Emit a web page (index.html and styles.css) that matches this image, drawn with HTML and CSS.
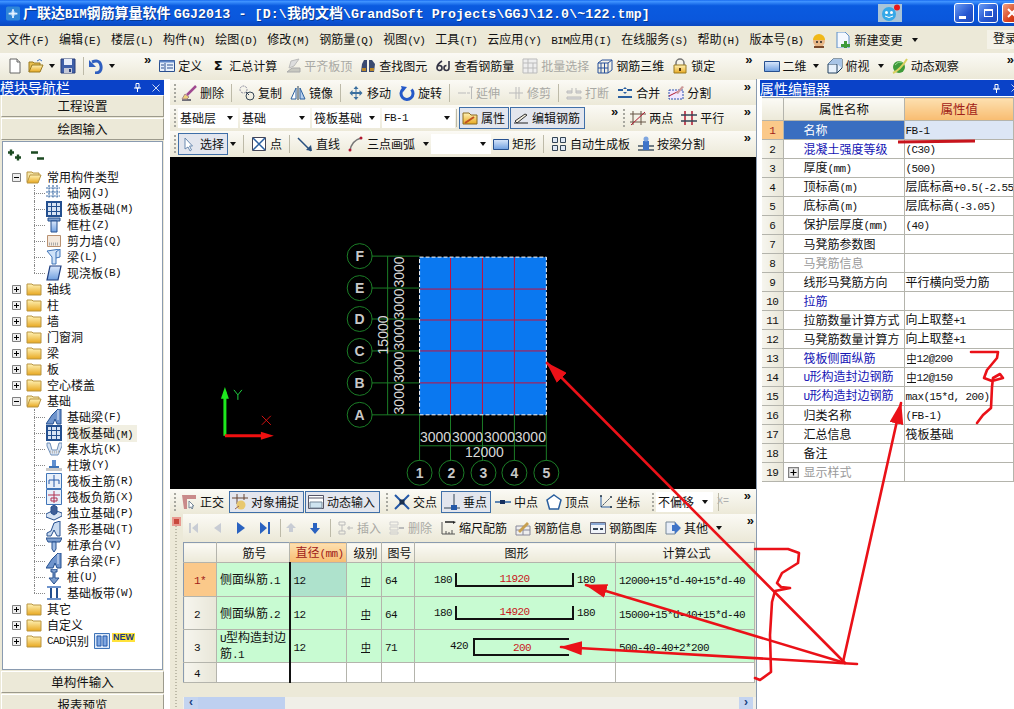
FILE: index.html
```html
<!DOCTYPE html>
<html lang="zh">
<head>
<meta charset="utf-8">
<title>广联达BIM钢筋算量软件 GGJ2013</title>
<link rel="stylesheet" href="styles.css">
</head>
<body>
<svg class="sprite" width="0" height="0" aria-hidden="true">
<defs>
<linearGradient id="gblue" x1="0" y1="0" x2="0" y2="1"><stop offset="0" stop-color="#dbe8fb"/><stop offset="1" stop-color="#6f9fe0"/></linearGradient>
<linearGradient id="gfold" x1="0" y1="0" x2="0" y2="1"><stop offset="0" stop-color="#fff3b8"/><stop offset="1" stop-color="#e8a820"/></linearGradient>
<symbol id="new" viewBox="0 0 16 16"><path d="M3 1h7l3 3v11H3z" fill="#fff" stroke="#666"/><path d="M10 1v3h3" fill="#ddd" stroke="#666"/></symbol>
<symbol id="open" viewBox="0 0 16 16"><path d="M1 14V4h4l1 1h6v2" fill="#e8c050" stroke="#9a7a20"/><path d="M1 14l3-7h11l-3 7z" fill="url(#gfold)" stroke="#9a7a20"/><path d="M9 3q3-3 5 0" fill="none" stroke="#3a6fc0"/></symbol>
<symbol id="save" viewBox="0 0 16 16"><path d="M1 1h14v14H1z" fill="#3f5fa8" stroke="#2a3f78"/><path d="M4 1h8v6H4z" fill="#e8eefa"/><path d="M4 10h8v5H4z" fill="#c4c8d8"/><path d="M9 11h2v3H9z" fill="#2a3f78"/></symbol>
<symbol id="undo" viewBox="0 0 16 16"><path d="M4 4q8-3 9 4t-6 7" fill="none" stroke="#2f5fc0" stroke-width="3"/><path d="M1 2v7h7z" fill="#2f5fc0"/></symbol>
<symbol id="def" viewBox="0 0 16 16"><path d="M.5 2.500h15v11H.5z" fill="#e8f0fb" stroke="#2a4f8f"/><path d="M.5 2.500h15v2H.5z" fill="#5f86c8"/><path d="M6 5v8M2 7h3M2 10h3M8 7h6M8 10h6" stroke="#2a4f8f"/></symbol>
<symbol id="align" viewBox="0 0 16 16"><path d="M2 14h13v-4H7z" fill="#c8c8c0" stroke="#aaa"/><path d="M4 10l2-7 8-2-5 7z" fill="#ddd" stroke="#bbb"/></symbol>
<symbol id="find" viewBox="0 0 16 16"><path d="M2 6l2-4h3v12H1zM14 14H9V2h3l3 4z" fill="#3a4a70"/><path d="M2 10h4v3H2zM10 10h4v3h-4z" fill="#b8862a"/></symbol>
<symbol id="see" viewBox="0 0 16 16"><path d="M7 3Q2 6 2 10a2.500 2.500 0 1 0 5 0a2.500 2.500 0 0 0-5 0M14 3v7a2.500 2.500 0 1 1-2.500-2.500" fill="none" stroke="#334" stroke-width="1.600"/></symbol>
<symbol id="batch" viewBox="0 0 16 16"><path d="M1 1h14v14H1zM1 5h14M1 10h14M6 1v14M11 5v10" fill="#eee" stroke="#bbb"/></symbol>
<symbol id="rebar3d" viewBox="0 0 16 16"><path d="M1 5l4-3h10v10l-4 3H1zM1 5h10v10M11 5l4-3M4 5v10M7.500 5v10M1 10h10" fill="none" stroke="#28509a"/></symbol>
<symbol id="lock" viewBox="0 0 16 16"><path d="M4 8V5a4 4 0 0 1 8 0v3" fill="none" stroke="#777" stroke-width="1.500"/><path d="M2 7h12v8H2z" fill="url(#gfold)" stroke="#9a7a20"/><path d="M7 10h2v3H7z" fill="#5a3a10"/></symbol>
<symbol id="rect" viewBox="0 0 16 16"><path d="M.5 3.500h15v10H.5z" fill="url(#gblue)" stroke="#27508f"/></symbol>
<symbol id="cube" viewBox="0 0 16 16"><path d="M1 6l5-5h9v9l-5 5H1z" fill="#e8f1fb" stroke="#23415f"/><path d="M1 6h9v9M10 6l5-5" fill="none" stroke="#23415f"/><path d="M6 1h9v9l-5-4H1z" fill="#a8c4e6"/></symbol>
<symbol id="orbit" viewBox="0 0 16 16"><circle cx="7" cy="9" r="6" fill="#3f9a3a"/><path d="M1 15Q8 12 15 1" fill="none" stroke="#d8d060" stroke-width="2"/><path d="M3 7q3-4 7-3" fill="none" stroke="#9fe09a"/></symbol>
<symbol id="del" viewBox="0 0 16 16"><path d="M1 15h9" stroke="#445" stroke-width="1.500"/><path d="M1 14l3-5 4 3-2 2z" fill="#eed27a" stroke="#a88"/><path d="M6 10L15 1" stroke="#a04a90" stroke-width="2.500"/></symbol>
<symbol id="copy" viewBox="0 0 16 16"><circle cx="4.500" cy="4.500" r="3.500" fill="none" stroke="#889" stroke-dasharray="2 1"/><circle cx="11" cy="11" r="4" fill="none" stroke="#345"/><path d="M7 7l3 3" stroke="#345"/></symbol>
<symbol id="mirror" viewBox="0 0 16 16"><path d="M8 1v14" stroke="#345"/><path d="M6 3v11H1z" fill="#fff" stroke="#2a5f9f"/><path d="M10 3v11h5z" fill="#b9d1ef" stroke="#2a5f9f"/></symbol>
<symbol id="move" viewBox="0 0 16 16"><path d="M8 1l2.500 3h-2v3h3V5l3 3-3 3V9h-3v3h2L8 15l-2.500-3h2V9h-3v2l-3-3 3-3v2h3V4h-2z" fill="#3a6f9f"/></symbol>
<symbol id="rot" viewBox="0 0 16 16"><path d="M12.500 4.500A6 6 0 1 1 4 4" fill="none" stroke="#2458c8" stroke-width="3"/><path d="M2 1l6 1-4 5z" fill="#2458c8"/></symbol>
<symbol id="ext" viewBox="0 0 16 16"><path d="M1 8h8M10 8h3M14.500 2v12M12 2h5" stroke="#bbb"/></symbol>
<symbol id="trim" viewBox="0 0 16 16"><path d="M1 8h14M8 2v12M11 2v12" stroke="#bbb"/></symbol>
<symbol id="brk" viewBox="0 0 16 16"><path d="M1 12h14v2H1zM1 6h5v2H1zM10 6h5v2h-5zM6 3v3M10 3v3" fill="#ddd" stroke="#bbb"/></symbol>
<symbol id="merge" viewBox="0 0 16 16"><path d="M1 5h5M10 5h5M1 12h14" stroke="#2a5f9f" stroke-width="2"/><path d="M8 2l2 2H6zM8 9l2-2H6z" fill="#2a5f9f"/></symbol>
<symbol id="split" viewBox="0 0 16 16"><path d="M1 5h14v9H1z" fill="#f0e8ff" stroke="#2a4fb0" stroke-dasharray="2 1"/><path d="M1 11l10-5" stroke="#b01830"/><path d="M8 8l6-7 2 1-6 7z" fill="#c99"/></symbol>
<symbol id="prop" viewBox="0 0 16 16"><path d="M1 14V3h6l2 2h6v9z" fill="url(#gfold)" stroke="#8a6a20"/><path d="M3 13l9-6" stroke="#c05020" stroke-width="2"/></symbol>
<symbol id="edit" viewBox="0 0 16 16"><path d="M1 13h14" stroke="#222"/><path d="M2 11l2 2 10-8-2-1z" fill="#f4efe0" stroke="#333"/></symbol>
<symbol id="two" viewBox="0 0 16 16"><path d="M3 1v14M11 1v14M0 4h16M0 12h16" stroke="#654"/><path d="M1 15L15 2" stroke="#b01830"/></symbol>
<symbol id="para" viewBox="0 0 16 16"><path d="M4 1v14M11 1v14" stroke="#b01830" stroke-width="1.500"/><path d="M0 5h16M0 11h16" stroke="#345" stroke-width="1.500"/></symbol>
<symbol id="cursor" viewBox="0 0 16 16"><path d="M4 2v11l3-2 2 4 1.500-1-2-4h3z" fill="#fff" stroke="#6a8ab0"/></symbol>
<symbol id="pt" viewBox="0 0 16 16"><path d="M1.500 1.500h13v13h-13z" fill="#fff" stroke="#445"/><path d="M2 2l12 12M14 2L2 14" stroke="#2a5f9f" stroke-width="1.500"/></symbol>
<symbol id="ln" viewBox="0 0 16 16"><path d="M1 2l13 13" stroke="#28507f" stroke-width="1.500"/><path d="M15 15l-6-1 5-5z" fill="#28507f"/></symbol>
<symbol id="arc" viewBox="0 0 16 16"><path d="M2 15Q3 5 13 2" fill="none" stroke="#777" stroke-width="1.500"/><circle cx="2" cy="14" r="1.500" fill="#b01830"/><circle cx="13" cy="2" r="1.500" fill="#b01830"/></symbol>
<symbol id="auto" viewBox="0 0 16 16"><path d="M1.500 1.500h5v5h-5zM9.500 1.500h5v5h-5zM1.500 9.500h5v5h-5zM9.500 9.500h5v5h-5z" fill="#dfe8f4" stroke="#345"/></symbol>
<symbol id="bmsplit" viewBox="0 0 16 16"><path d="M0 10h16M0 14h16" stroke="#456" stroke-width="1.500"/><path d="M5 5h6v9H5z" fill="#3f74c8"/><circle cx="8" cy="3" r="2.500" fill="#7fa6e0"/></symbol>
<symbol id="ortho" viewBox="0 0 16 16"><path d="M1 1h5v14H3zM6 1h9v4H6z" fill="#c98a8a"/><path d="M8 7v7l2-1 1 2 1-1-1-2h2z" fill="#fff" stroke="#789"/></symbol>
<symbol id="snap" viewBox="0 0 16 16"><path d="M5 0v10M12 0v6M0 4h16" stroke="#643"/><circle cx="9" cy="11" r="4.500" fill="#e8c870"/><path d="M3 15l4-3" stroke="#965"/></symbol>
<symbol id="dyn" viewBox="0 0 16 16"><path d="M.5 1.500h15v13H.5z" fill="#fff" stroke="#556"/><path d="M1 4h14" stroke="#556"/><path d="M2 8h12v6H2z" fill="#cfe4f0" stroke="#789"/></symbol>
<symbol id="xpt" viewBox="0 0 16 16"><path d="M1 1l14 14M15 1L1 15" stroke="#2458a8" stroke-width="2"/><rect x="5.500" y="5.500" width="5" height="5" fill="#1a3050"/></symbol>
<symbol id="perp" viewBox="0 0 16 16"><path d="M10 0v14M0 14h16" stroke="#345"/><rect x="7" y="11" width="6" height="5" fill="#2458a8"/></symbol>
<symbol id="mid" viewBox="0 0 16 16"><path d="M0 8h16" stroke="#2a5f9f" stroke-width="1.500"/><rect x="5" y="6" width="5" height="4" fill="#16305f"/></symbol>
<symbol id="vx" viewBox="0 0 16 16"><path d="M8 1l7 5-2.500 9h-9L1 6z" fill="#fff" stroke="#2a5f9f" stroke-width="1.500"/></symbol>
<symbol id="coord" viewBox="0 0 16 16"><path d="M4 2v11h11" fill="none" stroke="#2a5f9f"/><path d="M4 13L13 4" stroke="#345" stroke-dasharray="2 1"/><circle cx="4" cy="2" r="1" fill="#234"/><circle cx="14" cy="3" r="1" fill="#234"/><circle cx="14" cy="13" r="1" fill="#234"/></symbol>
<symbol id="first" viewBox="0 0 16 16"><path d="M4 3h2v10H4zM13 3v10L7 8z" fill="#c8ccd4"/></symbol>
<symbol id="prev" viewBox="0 0 16 16"><path d="M12 3v10L5 8z" fill="#c8ccd4"/></symbol>
<symbol id="next" viewBox="0 0 16 16"><path d="M4 2v12l8-6z" fill="#2a62c0"/></symbol>
<symbol id="last" viewBox="0 0 16 16"><path d="M3 2v12l7-6zM11 2h2v12h-2z" fill="#2a62c0"/></symbol>
<symbol id="up" viewBox="0 0 16 16"><path d="M8 3l5 5h-3v4H6V8H3z" fill="#c8ccd4"/></symbol>
<symbol id="down" viewBox="0 0 16 16"><path d="M8 14l5-6h-3V3H6v5H3z" fill="#2a62c0"/></symbol>
<symbol id="ins" viewBox="0 0 16 16"><path d="M1 2h6v3H1zM1 11h6v3H1zM4 5v6" fill="none" stroke="#bbb"/><path d="M9 8h6M11 6v4" stroke="#bbb"/></symbol>
<symbol id="rm" viewBox="0 0 16 16"><path d="M1 2h8v3H1zM1 7h8v3H1zM1 12h8v2H1z" fill="none" stroke="#ccc"/><path d="M10 8h5" stroke="#bbb" stroke-width="2"/></symbol>
<symbol id="scale" viewBox="0 0 16 16"><path d="M2 2v12M2 14h13M6 14v-3M9 14v-2M12 14v-4" stroke="#555"/><path d="M5 2h8" stroke="#222" stroke-width="1.500"/><path d="M13 1l3 1-3 2z" fill="#222"/></symbol>
<symbol id="info" viewBox="0 0 16 16"><path d="M1 6h14v9H1z" fill="#eee" stroke="#889"/><path d="M1 10h14M8 6v9" stroke="#889"/><path d="M3 11L12 2l2 2-9 9z" fill="#c8a050"/></symbol>
<symbol id="lib" viewBox="0 0 16 16"><path d="M.5 2.500h15v11H.5z" fill="#f0f4fa" stroke="#667"/><path d="M1 3h14v2H1z" fill="#8aa8d4"/><path d="M3 9h5M10 9h3" stroke="#345" stroke-width="2"/></symbol>
<symbol id="oth" viewBox="0 0 16 16"><path d="M1 2h9v12H1z" fill="#e8eef8" stroke="#789"/><path d="M7 5h3V2l6 6-6 6v-3H7z" fill="#3f74c8"/></symbol>
<symbol id="tgrid" viewBox="0 0 16 16"><path d="M3 0v13M7 0v13M11 0v13M0 3h14M0 7h14M0 11h14" stroke="#3f6fa8" stroke-width="1.200" stroke-dasharray="2 .6"/></symbol>
<symbol id="traft" viewBox="0 0 16 16"><path d="M1 1h14v14H1z" fill="#d8e4f4" stroke="#234f8f" stroke-width="2"/><path d="M5.500 1v14M10.500 1v14M1 5.500h14M1 10.500h14" stroke="#234f8f"/></symbol>
<symbol id="tcol" viewBox="0 0 16 16"><path d="M2 1h12v3H2z" fill="#7fa0cf" stroke="#27508f"/><path d="M5 4h6v11H5z" fill="url(#gblue)" stroke="#27508f"/></symbol>
<symbol id="twall" viewBox="0 0 16 16"><path d="M1.500 2.500h13v11h-13z" fill="#f4e8dc" stroke="#b89070"/><path d="M3 11h9" stroke="#aaa" stroke-width="3" stroke-dasharray="1 1"/></symbol>
<symbol id="tbeam" viewBox="0 0 16 16"><path d="M1 2l13-2v8l-4 1v6H6V8z" fill="#cfe2f8" stroke="#3f74b8"/><path d="M10 9V3l4-3" fill="none" stroke="#3f74b8"/></symbol>
<symbol id="tslab" viewBox="0 0 16 16"><path d="M4 1h11l-3 14H1z" fill="url(#gblue)" stroke="#1f3f80" stroke-width="1.200"/></symbol>
<symbol id="tfb" viewBox="0 0 16 16"><path d="M0 15l6-9 6-6h3v15H11l-2-5-2 5z" fill="#6f94cc" stroke="#234f8f"/><path d="M12 1v10" stroke="#dfe8f8"/></symbol>
<symbol id="tpit" viewBox="0 0 16 16"><path d="M1 2h3l2 7h5l2-7h3v3l-4 9H5L1 5z" fill="#d8e4f4" stroke="#6f8fb8"/><path d="M4 11h9" stroke="#bbb" stroke-dasharray="1 1" stroke-width="3"/></symbol>
<symbol id="tpier" viewBox="0 0 16 16"><path d="M0 11h16v3H0z" fill="#c8c8c8"/><path d="M3 9h10v2H3z" fill="#3f74b8"/><path d="M6 3h4v6H6z" fill="#5f8fd0"/></symbol>
<symbol id="trm" viewBox="0 0 16 16"><path d="M.5 .5h15v15H.5z" fill="#e8f0fa" stroke="#3f74b8"/><path d="M8 2v12M3 7h10M3 7v4M13 7v4" stroke="#2458a8"/></symbol>
<symbol id="trn" viewBox="0 0 16 16"><path d="M.5 .5h15v15H.5z" fill="#e8f0fa" stroke="#3f74b8"/><path d="M2 6h12M8 2v12M5 9h6v3H5z" fill="none" stroke="#b03050"/></symbol>
<symbol id="tiso" viewBox="0 0 16 16"><path d="M0 9l8-4 8 3v3l-8 4-8-3z" fill="#d8e4f4" stroke="#27508f"/><path d="M5 8V2l3-2 3 2v6l-3 2z" fill="#3f5f98" stroke="#27508f"/></symbol>
<symbol id="tstrip" viewBox="0 0 16 16"><path d="M1 15v-3l4-2 3-8 6-2v15H11l-3-6-3 6z" fill="#c8daf0" stroke="#27508f"/></symbol>
<symbol id="tcap" viewBox="0 0 16 16"><path d="M0 1h16l-2 4H2z" fill="#7fa0cf" stroke="#27508f"/><path d="M6 5h4v7l-2 3-2-3z" fill="#9fbce4" stroke="#27508f"/></symbol>
<symbol id="tpile" viewBox="0 0 16 16"><path d="M5 0h6v3H9v6h4l-5 6-5-6h4V3H5z" fill="#7a9ccc" stroke="#27508f"/></symbol>
<symbol id="tband" viewBox="0 0 16 16"><path d="M1 1h14v2H1zM1 13h14v2H1z" fill="#6f94cc"/><path d="M4 3h2v10H4zM10 3h2v10h-2z" fill="#234f8f"/></symbol>
<symbol id="fold" viewBox="0 0 16 16"><path d="M1 14V3h5l1 1h8v10z" fill="url(#gfold)" stroke="#b89440"/></symbol>
<symbol id="foldo" viewBox="0 0 16 16"><path d="M1 13V3h5l1 1h6v2" fill="#f6e6a8" stroke="#b89440"/><path d="M1 14l3-8h11l-3 8z" fill="url(#gfold)" stroke="#b89440"/></symbol>
<symbol id="plus" viewBox="0 0 9 9"><path d="M.5 .5h8v8h-8z" fill="#eee" stroke="#808080"/><path d="M2 4.500h5M4.500 2v5" stroke="#000"/></symbol>
<symbol id="minus" viewBox="0 0 9 9"><path d="M.5 .5h8v8h-8z" fill="#eee" stroke="#808080"/><path d="M2 4.500h5" stroke="#000"/></symbol>
<symbol id="cad" viewBox="0 0 16 16"><path d="M.5 .5h15v15H.5z" fill="#dce8f8" stroke="#3f74b8"/><path d="M3 3h4v10H3zM9 3h4v10H9z" fill="#7fa6e0" stroke="#2458a8"/></symbol>
<symbol id="user" viewBox="0 0 16 16"><circle cx="8" cy="9" r="6" fill="#e8b888"/><path d="M2 8a6 6 0 0 1 12 0z" fill="#f0b818"/><circle cx="6" cy="10" r="1" fill="#222"/><circle cx="10" cy="10" r="1" fill="#222"/><path d="M3 14h10v2H3z" fill="#7a4a2a"/></symbol>
<symbol id="chg" viewBox="0 0 16 16"><path d="M2 0h8l4 4v12H2z" fill="#f4f8ff" stroke="#5f8fc8"/><path d="M9 9h3v3h3v3h-3v1H9v-1H6v-3h3z" fill="#3f9a3a"/></symbol>
<symbol id="expand" viewBox="0 0 15 12"><path d="M1 3.500h6M4 .5v6M8 8.500h6M11 5.500v6" stroke="#1c4a22" stroke-width="2.400"/></symbol>
<symbol id="collapse" viewBox="0 0 15 12"><path d="M1 3.500h7M7 9.500h7" stroke="#1c4a22" stroke-width="2.400"/></symbol>
<symbol id="pin" viewBox="0 0 7 9"><path d="M2 .5h3v4.500H2zM0 5h7M3.500 5v4" fill="none" stroke="#fff"/></symbol>
<symbol id="cross" viewBox="0 0 8 8"><path d="M.5 .5l7 7M7.500 .5l-7 7" stroke="#cdd8f4"/></symbol>
</defs>
</svg>

<div class="app">
  <header class="titlebar">
    <svg class="app-logo" viewBox="0 0 16 16"><rect width="16" height="16" rx="2" fill="#2f86d8"/><path d="M3 8h10M8 3v10" stroke="#e8f4ff" stroke-width="2"/><circle cx="8" cy="8" r="2.500" fill="none" stroke="#bfe0ff"/></svg>
    <h1 class="title-text">广联达<b class="tl-s">BIM</b>钢筋算量软件 <b class="tl">GGJ2013 - [D:\</b>我的文档<b class="tl">\GrandSoft Projects\GGJ\12.0\~122.tmp]</b></h1>
    <div class="title-right">
      <svg class="smile" viewBox="0 0 24 18"><rect width="24" height="18" fill="#a8c4d8"/><circle cx="11" cy="10" r="7" fill="#35a8e8"/><circle cx="8.500" cy="8.500" r="1.500" fill="#fff"/><circle cx="13.500" cy="8.500" r="1.500" fill="#fff"/><path d="M7 12q4 3 8 0" fill="none" stroke="#fff"/><circle cx="19" cy="3.500" r="3" fill="#e81818"/></svg>
      <div class="winbtn"><span class="g-min"></span></div>
      <div class="winbtn"><span class="g-rest"></span></div>
      <div class="winbtn close"><svg class="g-x" viewBox="0 0 10 10"><path d="M1 1l8 8M9 1l-8 8" stroke="#fff" stroke-width="2"/></svg></div>
    </div>
  </header>

  <nav class="menubar">
    <span>文件<i>(F)</i></span><span>编辑<i>(E)</i></span><span>楼层<i>(L)</i></span><span>构件<i>(N)</i></span><span>绘图<i>(D)</i></span><span>修改<i>(M)</i></span><span>钢筋量<i>(Q)</i></span><span>视图<i>(V)</i></span><span>工具<i>(T)</i></span><span>云应用<i>(Y)</i></span><span><i>BIM</i>应用<i>(I)</i></span><span>在线服务<i>(S)</i></span><span>帮助<i>(H)</i></span><span>版本号<i>(B)</i></span>
    <svg class="ic ml-user"><use href="#user"/></svg>
    <span class="tool"><svg class="ic"><use href="#chg"/></svg>新建变更</span><em class="dd"></em>
    <span class="login">登录</span>
  </nav>

  <div class="tb tb-top">
    <svg class="ic"><use href="#new"/></svg>
    <svg class="ic ml-m3"><use href="#open"/></svg><em class="dd ml-m3"></em>
    <svg class="ic ml-m3"><use href="#save"/></svg><s class="sep"></s>
    <svg class="ic ml-m3"><use href="#undo"/></svg><em class="dd ml-m3"></em>
    <b class="more ml-21">»</b>
    <span class="tool"><svg class="ic"><use href="#def"/></svg>定义</span>
    <span class="tool"><span class="ic sigma">Σ</span>汇总计算</span>
    <span class="tool off"><svg class="ic"><use href="#align"/></svg>平齐板顶</span>
    <span class="tool"><svg class="ic"><use href="#find"/></svg>查找图元</span>
    <span class="tool"><svg class="ic"><use href="#see"/></svg>查看钢筋量</span>
    <span class="tool off"><svg class="ic"><use href="#batch"/></svg>批量选择</span>
    <span class="tool"><svg class="ic"><use href="#rebar3d"/></svg>钢筋三维</span>
    <span class="tool"><svg class="ic"><use href="#lock"/></svg>锁定</span>
    <b class="more ml-22">»</b>
    <span class="tool ml-3"><svg class="ic"><use href="#rect"/></svg>二维</span><em class="dd ml-m2"></em>
    <span class="tool"><svg class="ic"><use href="#cube"/></svg>俯视</span><em class="dd"></em>
    <span class="tool"><svg class="ic"><use href="#orbit"/></svg>动态观察</span>
    <b class="more ml-auto">»</b>
  </div>

  <main class="workspace">
    <aside class="nav-pane">
      <div class="pane-head">模块导航栏<svg class="pin"><use href="#pin"/></svg><svg class="pane-x"><use href="#cross"/></svg></div>
      <button class="nav-btn">工程设置</button>
      <button class="nav-btn">绘图输入</button>
      <div class="tree">
        <div class="tree-tools"><svg class="pm"><use href="#expand"/></svg><svg class="pm"><use href="#collapse"/></svg></div>
        <ul class="tree-list">
          <li class="node"><svg class="ex"><use href="#minus"/></svg><svg class="ic"><use href="#foldo"/></svg>常用构件类型</li>
          <li class="leaf"><svg class="ic"><use href="#tgrid"/></svg>轴网<i>(J)</i></li>
          <li class="leaf"><svg class="ic"><use href="#traft"/></svg>筏板基础<i>(M)</i></li>
          <li class="leaf"><svg class="ic"><use href="#tcol"/></svg>框柱<i>(Z)</i></li>
          <li class="leaf"><svg class="ic"><use href="#twall"/></svg>剪力墙<i>(Q)</i></li>
          <li class="leaf"><svg class="ic"><use href="#tbeam"/></svg>梁<i>(L)</i></li>
          <li class="leaf last"><svg class="ic"><use href="#tslab"/></svg>现浇板<i>(B)</i></li>
          <li class="node"><svg class="ex"><use href="#plus"/></svg><svg class="ic"><use href="#fold"/></svg>轴线</li>
          <li class="node"><svg class="ex"><use href="#plus"/></svg><svg class="ic"><use href="#fold"/></svg>柱</li>
          <li class="node"><svg class="ex"><use href="#plus"/></svg><svg class="ic"><use href="#fold"/></svg>墙</li>
          <li class="node"><svg class="ex"><use href="#plus"/></svg><svg class="ic"><use href="#fold"/></svg>门窗洞</li>
          <li class="node"><svg class="ex"><use href="#plus"/></svg><svg class="ic"><use href="#fold"/></svg>梁</li>
          <li class="node"><svg class="ex"><use href="#plus"/></svg><svg class="ic"><use href="#fold"/></svg>板</li>
          <li class="node"><svg class="ex"><use href="#plus"/></svg><svg class="ic"><use href="#fold"/></svg>空心楼盖</li>
          <li class="node"><svg class="ex"><use href="#minus"/></svg><svg class="ic"><use href="#foldo"/></svg>基础</li>
          <li class="leaf"><svg class="ic"><use href="#tfb"/></svg>基础梁<i>(F)</i></li>
          <li class="leaf sel"><svg class="ic"><use href="#traft"/></svg><span>筏板基础<i>(M)</i></span></li>
          <li class="leaf"><svg class="ic"><use href="#tpit"/></svg>集水坑<i>(K)</i></li>
          <li class="leaf"><svg class="ic"><use href="#tpier"/></svg>柱墩<i>(Y)</i></li>
          <li class="leaf"><svg class="ic"><use href="#trm"/></svg>筏板主筋<i>(R)</i></li>
          <li class="leaf"><svg class="ic"><use href="#trn"/></svg>筏板负筋<i>(X)</i></li>
          <li class="leaf"><svg class="ic"><use href="#tiso"/></svg>独立基础<i>(P)</i></li>
          <li class="leaf"><svg class="ic"><use href="#tstrip"/></svg>条形基础<i>(T)</i></li>
          <li class="leaf"><svg class="ic"><use href="#tcap"/></svg>桩承台<i>(V)</i></li>
          <li class="leaf"><svg class="ic"><use href="#tfb"/></svg>承台梁<i>(F)</i></li>
          <li class="leaf"><svg class="ic"><use href="#tpile"/></svg>桩<i>(U)</i></li>
          <li class="leaf last"><svg class="ic"><use href="#tband"/></svg>基础板带<i>(W)</i></li>
          <li class="node"><svg class="ex"><use href="#plus"/></svg><svg class="ic"><use href="#fold"/></svg>其它</li>
          <li class="node"><svg class="ex"><use href="#plus"/></svg><svg class="ic"><use href="#fold"/></svg>自定义</li>
          <li class="node"><svg class="ex"><use href="#plus"/></svg><svg class="ic"><use href="#fold"/></svg><i>CAD</i>识别<svg class="ic cad"><use href="#cad"/></svg><span class="new">NEW</span></li>
        </ul>
      </div>
      <button class="nav-btn">单构件输入</button>
      <button class="nav-btn">报表预览</button>
    </aside>

    <section class="center">
      <div class="tb tb-c">
        <u class="grip"></u>
        <span class="tool"><svg class="ic"><use href="#del"/></svg>删除</span><s class="sep"></s>
        <span class="tool"><svg class="ic"><use href="#copy"/></svg>复制</span>
        <span class="tool"><svg class="ic"><use href="#mirror"/></svg>镜像</span><s class="sep"></s>
        <span class="tool"><svg class="ic"><use href="#move"/></svg>移动</span>
        <span class="tool"><svg class="ic"><use href="#rot"/></svg>旋转</span><s class="sep"></s>
        <span class="tool off"><svg class="ic"><use href="#ext"/></svg>延伸</span>
        <span class="tool off"><svg class="ic"><use href="#trim"/></svg>修剪</span><s class="sep"></s>
        <span class="tool off"><svg class="ic"><use href="#brk"/></svg>打断</span>
        <span class="tool"><svg class="ic"><use href="#merge"/></svg>合并</span>
        <span class="tool"><svg class="ic"><use href="#split"/></svg>分割</span>
        <b class="more ml-auto">»</b>
      </div>
      <div class="tb tb-c tb-d">
        <u class="grip g-tight"></u>
        <span class="combo w60">基础层<em class="dd"></em></span>
        <span class="combo w70">基础<em class="dd"></em></span>
        <span class="combo w68">筏板基础<em class="dd"></em></span>
        <span class="combo w73"><i>FB-1</i><em class="dd"></em></span><s class="sep"></s>
        <span class="btn-group ml-m5"><span class="tool on w50"><svg class="ic"><use href="#prop"/></svg>属性</span><span class="tool on w75"><svg class="ic"><use href="#edit"/></svg>编辑钢筋</span></span>
        <b class="more ml-18">»</b>
        <u class="grip ml-m3"></u>
        <span class="tool"><svg class="ic"><use href="#two"/></svg>两点</span>
        <span class="tool"><svg class="ic"><use href="#para"/></svg>平行</span>
        <b class="more ml-auto">»</b>
      </div>
      <div class="tb tb-c tb-d">
        <u class="grip g-tight"></u>
        <span class="tool on w50"><svg class="ic"><use href="#cursor"/></svg>选择</span><em class="dd ml-m6"></em><s class="sep"></s>
        <span class="tool"><svg class="ic"><use href="#pt"/></svg>点</span><s class="sep"></s>
        <span class="tool"><svg class="ic"><use href="#ln"/></svg>直线</span>
        <span class="tool"><svg class="ic"><use href="#arc"/></svg>三点画弧</span><em class="dd"></em>
        <span class="combo w60 ml-m6"><em class="dd end"></em></span>
        <span class="tool"><svg class="ic"><use href="#rect"/></svg>矩形</span><s class="sep"></s>
        <span class="tool"><svg class="ic"><use href="#auto"/></svg>自动生成板</span>
        <span class="tool"><svg class="ic"><use href="#bmsplit"/></svg>按梁分割</span>
        <b class="more ml-auto">»</b>
      </div>

      <div class="canvas">
        <svg class="drawing" viewBox="170 157 587 332">
          <rect x="420" y="257" width="127" height="158" fill="#0a78f0"/>
          <g class="gl">
            <path d="M372 256H420M372 288H420M372 319H420M372 351H420M372 383H420M372 415H420M388 256V415M420 415V461M451 415V461M483 415V461M515 415V461M547 415V461M420 446H547"/>
            <circle cx="360" cy="256" r="12.500"/><circle cx="360" cy="288" r="12.500"/><circle cx="360" cy="319" r="12.500"/><circle cx="360" cy="351" r="12.500"/><circle cx="360" cy="383" r="12.500"/><circle cx="360" cy="415" r="12.500"/>
            <circle cx="420" cy="473" r="12.500"/><circle cx="452" cy="473" r="12.500"/><circle cx="484" cy="473" r="12.500"/><circle cx="515" cy="473" r="12.500"/><circle cx="547" cy="473" r="12.500"/>
          </g>
          <path class="rl" d="M451 257V415M483 257V415M515 257V415M420 289H547M420 320H547M420 351H547M420 383H547"/>
          <rect class="dash" x="420" y="257" width="127" height="158"/>
          <g class="dim">
            <g class="axis-id">
              <text x="360" y="261">F</text><text x="360" y="293">E</text><text x="360" y="324">D</text><text x="360" y="356">C</text><text x="360" y="388">B</text><text x="360" y="420">A</text>
              <text x="420" y="478">1</text><text x="452" y="478">2</text><text x="484" y="478">3</text><text x="515" y="478">4</text><text x="547" y="478">5</text>
            </g>
            <text x="436" y="442">3000</text><text x="468" y="442">3000</text><text x="500" y="442">3000</text><text x="531" y="442">3000</text>
            <text x="485" y="457">12000</text>
            <text transform="translate(404 272) rotate(-90)">3000</text><text transform="translate(404 304) rotate(-90)">3000</text><text transform="translate(404 335) rotate(-90)">3000</text><text transform="translate(404 367) rotate(-90)">3000</text><text transform="translate(404 399) rotate(-90)">3000</text>
            <text transform="translate(388 335) rotate(-90)">15000</text>
          </g>
          <path d="M225 436V392" stroke="#1ee81e" stroke-width="3"/><path d="M225 387l-4 12h8z" fill="#1ee81e"/>
          <path d="M225 436H265" stroke="#f01010" stroke-width="3"/><path d="M274 436l-13-4v8z" fill="#f01010"/>
          <path d="M234 390l4 5 4-5M238 395v5" fill="none" stroke="#20d040"/>
          <path d="M262 416l9 9M271 416l-9 9" stroke="#d01010"/>
        </svg>
      </div>

      <div class="tb tb-c tb-e">
        <u class="grip"></u>
        <span class="tool"><svg class="ic"><use href="#ortho"/></svg>正交</span>
        <span class="btn-group ml-m3"><span class="tool on w75"><svg class="ic"><use href="#snap"/></svg>对象捕捉</span><span class="tool on w75"><svg class="ic"><use href="#dyn"/></svg>动态输入</span></span>
        <u class="grip g-snap"></u>
        <span class="tool"><svg class="ic"><use href="#xpt"/></svg>交点</span>
        <span class="tool on w50 ml-m4"><svg class="ic"><use href="#perp"/></svg>垂点</span>
        <span class="tool ml-m4"><svg class="ic"><use href="#mid"/></svg>中点</span>
        <span class="tool"><svg class="ic"><use href="#vx"/></svg>顶点</span>
        <span class="tool"><svg class="ic"><use href="#coord"/></svg>坐标</span>
        <u class="grip g-tight ml-4"></u>
        <span class="combo w57">不偏移<em class="dd"></em></span><s class="sep sep-x"></s>
        <span class="xeq">X=</span>
        <b class="more ml-auto">»</b>
      </div>

      <div class="rebar-pane">
        <div class="side-grip"><span class="pane-close"></span></div>
        <div class="rebar-body">
          <div class="tb tb-f">
            <svg class="ic"><use href="#first"/></svg><svg class="ic"><use href="#prev"/></svg><svg class="ic"><use href="#next"/></svg><svg class="ic"><use href="#last"/></svg><s class="sep"></s>
            <svg class="ic ml-m5"><use href="#up"/></svg><svg class="ic"><use href="#down"/></svg><s class="sep"></s>
            <span class="tool off"><svg class="ic"><use href="#ins"/></svg>插入</span>
            <span class="tool off"><svg class="ic"><use href="#rm"/></svg>删除</span>
            <span class="tool"><svg class="ic"><use href="#scale"/></svg>缩尺配筋</span>
            <span class="tool"><svg class="ic"><use href="#info"/></svg>钢筋信息</span>
            <span class="tool"><svg class="ic"><use href="#lib"/></svg>钢筋图库</span>
            <span class="tool"><svg class="ic"><use href="#oth"/></svg>其他</span><em class="dd"></em>
            <b class="more ml-auto">»</b>
          </div>
          <table class="rebar">
            <colgroup><col class="c-r"><col class="c-n"><col class="c-d"><col class="c-g"><col class="c-t"><col class="c-s"><col></colgroup>
            <thead><tr class="h20"><th></th><th>筋号</th><th class="active">直径<i>(mm)</i></th><th>级别</th><th>图号</th><th>图形</th><th>计算公式</th></tr></thead>
            <tbody>
              <tr class="green h34"><th class="now"><i>1*</i></th><td>侧面纵筋<i>.1</i></td><td class="dia cursor"><i>12</i></td><td class="ctr"><span class="grade">中</span></td><td><i>64</i></td>
                <td><div class="shape"><i>180</i><span class="bar"><i>11920</i></span><i>180</i></div></td><td><i>12000+15*d-40+15*d-40</i></td></tr>
              <tr class="green h33"><th><i>2</i></th><td>侧面纵筋<i>.2</i></td><td class="cursor"><i>12</i></td><td class="ctr"><span class="grade">中</span></td><td><i>64</i></td>
                <td><div class="shape"><i>180</i><span class="bar"><i>14920</i></span><i>180</i></div></td><td><i>15000+15*d-40+15*d-40</i></td></tr>
              <tr class="green h33"><th><i>3</i></th><td class="tight"><i>U</i>型构造封边筋<i>.1</i></td><td class="cursor"><i>12</i></td><td class="ctr"><span class="grade">中</span></td><td><i>71</i></td>
                <td><div class="shape shape-u"><i>420</i><span class="ubar"><i>200</i></span></div></td><td><i>500-40-40+2*200</i></td></tr>
              <tr class="h20"><th><i>4</i></th><td></td><td class="cursor"></td><td></td><td></td><td></td><td></td></tr>
            </tbody>
          </table>
          <div class="hscroll"><span class="sb-btn">‹</span><span class="sb-thumb"></span><span class="sb-btn end">›</span></div>
        </div>
      </div>
    </section>

    <aside class="prop-pane">
      <div class="pane-head">属性编辑器<svg class="pin"><use href="#pin"/></svg><svg class="pane-x"><use href="#cross"/></svg></div>
      <table class="props">
        <colgroup><col class="p-r"><col class="p-n"><col></colgroup>
        <thead><tr><th></th><th>属性名称</th><th class="active">属性值</th></tr></thead>
        <tbody>
          <tr class="cur"><th><i>1</i></th><td>名称</td><td><i>FB-1</i></td></tr>
          <tr><th><i>2</i></th><td class="bl">混凝土强度等级</td><td><i>(C30)</i></td></tr>
          <tr><th><i>3</i></th><td>厚度<i>(mm)</i></td><td><i>(500)</i></td></tr>
          <tr><th><i>4</i></th><td>顶标高<i>(m)</i></td><td>层底标高<i>+0.5(-2.55</i></td></tr>
          <tr><th><i>5</i></th><td>底标高<i>(m)</i></td><td>层底标高<i>(-3.05)</i></td></tr>
          <tr><th><i>6</i></th><td>保护层厚度<i>(mm)</i></td><td><i>(40)</i></td></tr>
          <tr><th><i>7</i></th><td>马凳筋参数图</td><td></td></tr>
          <tr><th><i>8</i></th><td class="gy">马凳筋信息</td><td></td></tr>
          <tr><th><i>9</i></th><td>线形马凳筋方向</td><td>平行横向受力筋</td></tr>
          <tr><th><i>10</i></th><td class="bl">拉筋</td><td></td></tr>
          <tr><th><i>11</i></th><td>拉筋数量计算方式</td><td>向上取整<i>+1</i></td></tr>
          <tr><th><i>12</i></th><td>马凳筋数量计算方</td><td>向上取整<i>+1</i></td></tr>
          <tr><th><i>13</i></th><td class="bl">筏板侧面纵筋</td><td><span class="grade">中</span><i>12@200</i></td></tr>
          <tr><th><i>14</i></th><td class="bl"><i>U</i>形构造封边钢筋</td><td><span class="grade">中</span><i>12@150</i></td></tr>
          <tr><th><i>15</i></th><td class="bl"><i>U</i>形构造封边钢筋</td><td><i>max(15*d, 200)</i></td></tr>
          <tr><th><i>16</i></th><td>归类名称</td><td><i>(FB-1)</i></td></tr>
          <tr><th><i>17</i></th><td>汇总信息</td><td>筏板基础</td></tr>
          <tr><th><i>18</i></th><td>备注</td><td></td></tr>
          <tr><th><i>19</i></th><td class="gy exp-cell"><svg class="exbox"><use href="#plus"/></svg>显示样式</td><td></td></tr>
        </tbody>
      </table>
    </aside>
  </main>

  <svg class="marks" viewBox="0 0 1014 709" aria-hidden="true">
    <defs>
      <marker id="rh" viewBox="0 0 22 14" refX="21" refY="7" markerWidth="22" markerHeight="14" markerUnits="userSpaceOnUse" orient="auto"><path d="M0 0l22 7-22 7z" fill="#ea1118"/></marker>
    </defs>
    <g class="ink">
      <path d="M845 663L547 363" marker-end="url(#rh)"/>
      <path d="M845 663L586 585" marker-end="url(#rh)"/>
      <path d="M857 664L561 647" marker-end="url(#rh)"/>
      <path d="M843 662L901 403" marker-end="url(#rh)"/>
      <path d="M755 549H788L799 553L798 563L782 573L777 583L781 587L790 588M790 588L775 591L772 602L770 635L771 672L760 680L755 678"/>
      <path d="M971 352H998L997 358L987 370L984 378L992 381L1003 378L1000 374L993 378L992 387L991 408L983 415L977 423"/>
    </g>
    <path class="under" d="M898 142L975 141"/>
  </svg>
</div>
</body>
</html>
```

FILE: styles.css
```css
* { box-sizing: border-box; }
html, body { margin: 0; padding: 0; background: #fff; }
body { font: 12px/16px "Noto Sans CJK SC", "Liberation Sans", sans-serif; color: #111; }
.sprite { position: absolute; }
i { font: normal 11px/14px "Liberation Mono", monospace; letter-spacing: -.6px; }
s { text-decoration: none; }
u { text-decoration: none; }
em { font-style: normal; }

.app { position: relative; width: 1014px; height: 709px; overflow: hidden; background: #fff; display: flex; flex-direction: column; }
.ic { width: 16px; height: 16px; flex: none; display: block; }

/* title bar */
.titlebar { height: 26px; flex: none; display: flex; align-items: center; padding-left: 6px; background: linear-gradient(#1a6cf0 0, #3f93ff 6%, #0a5be0 22%, #0a57dc 75%, #0a48c0 100%); color: #fff; }
.app-logo { width: 14px; height: 15px; flex: none; }
.title-text { margin: 0 0 0 3px; font: bold 14px/18px "Noto Sans CJK SC", sans-serif; white-space: pre; text-shadow: 1px 1px 0 #0a3a90; }
.tl { font: bold 13.300px/18px "Liberation Mono", monospace; letter-spacing: .1px; }
.tl-s { font: bold 12px/18px "Liberation Mono", monospace; }
.title-right { margin-left: auto; display: flex; align-items: center; gap: 4px; margin-right: -8px; }
.smile { width: 24px; height: 18px; margin-right: 48px; }
.winbtn { width: 20px; height: 20px; border: 1px solid #fff; border-radius: 3px; background: linear-gradient(135deg, #6a9cf4, #2556d0 60%, #1f48b8); display: flex; align-items: center; justify-content: center; }
.winbtn.close { background: linear-gradient(135deg, #f0a080, #d8401c 60%, #c02808); }
.g-min { width: 7px; height: 3px; background: #fff; margin-top: 8px; margin-right: 4px; }
.g-rest { width: 9px; height: 8px; border: 1px solid #fff; border-top-width: 2px; }
.g-x { width: 10px; height: 10px; }

/* menu */
.menubar { height: 27px; flex: none; display: flex; align-items: center; gap: 10px; padding-left: 7px; background: #ece9d8; white-space: nowrap; }
.menubar .tool { margin-left: -2px; }
.login { margin-left: auto; width: 27px; height: 19px; padding-left: 6px; overflow: hidden; background: #f4f2e8; }
.ml-user { margin-left: -2px; }

/* toolbars */
.tb { display: flex; align-items: center; gap: 8px; white-space: nowrap; background: linear-gradient(#fbfaf5, #ece9d8); }
.tb-top { height: 26px; flex: none; padding-left: 7px; }
.tb-c { height: 25px; flex: none; padding: 0 5px 0 4px; }
.tb-d { height: 26px; }
.tb-f { height: 27px; padding: 0 2px; }
.tool { display: inline-flex; align-items: center; gap: 3px; height: 22px; }
.off { color: #a9a9a4; }
.on { background: #e3e6ee; outline: 1px solid #3f6fa8; outline-offset: -1px; padding-left: 3px; }
.w50 { width: 50px; }
.w75 { width: 75px; }
.sep { width: 1px; height: 18px; background: #bdbaa8; flex: none; margin: 0 -1px; }
.sep-x { margin: 0 -5px 0 3px; }
.grip { width: 2px; height: 18px; border-left: 2px dotted #a8a8a0; flex: none; margin-right: -3px; }
.g-tight { margin-right: -6px; }
.g-snap { margin: 0 -2px 0 -2px; }
.dd { width: 0; height: 0; border: 3px solid transparent; border-top: 4px solid #111; border-bottom: 0; flex: none; }
.dd.end { margin-left: auto; }
.more { font: bold 13px/12px "Liberation Sans", sans-serif; color: #111; align-self: flex-start; margin-top: 1px; }
.ml-auto { margin-left: auto; }
.ml-21 { margin-left: 21px; }
.ml-22 { margin-left: 22px; }
.ml-18 { margin-left: 18px; }
.ml-3 { margin-left: 3px; }
.ml-4 { margin-left: 4px; }
.ml-m2 { margin-left: -2px; }
.ml-m3 { margin-left: -3px; }
.ml-m4 { margin-left: -4px; }
.ml-m5 { margin-left: -5px; }
.ml-m6 { margin-left: -6px; }
.sigma { font: bold 13px/16px "DejaVu Sans", sans-serif; text-align: center; }
.combo { height: 20px; background: #fff; display: inline-flex; align-items: center; justify-content: space-between; padding: 0 5px 0 2px; flex: none; margin-right: -6px; }
.w57 { width: 57px; }
.w60 { width: 60px; }
.w68 { width: 68px; }
.w70 { width: 70px; }
.w73 { width: 73px; }
.btn-group { display: inline-flex; gap: 1px; }
.xeq { color: #b0b0b0; font: 10px/16px "Liberation Mono", monospace; margin-left: -5px; }

/* workspace */
.workspace { flex: 1; display: flex; min-height: 0; }
.pane-head { height: 16px; margin-top: 1px; background: #0a42c8; color: #fff; font-size: 14px; line-height: 15px; display: flex; align-items: center; white-space: nowrap; }
.pin { margin-left: auto; width: 7px; height: 9px; flex: none; }
.pane-x { width: 8px; height: 8px; flex: none; margin: 0 4px 0 11px; }

/* left pane */
.nav-pane { width: 164px; flex: none; display: flex; flex-direction: column; background: #ece9d8; }
.nav-btn { height: 22px; flex: none; margin: 0 0 1px 1px; width: 163px; font: 12.500px/18px "Noto Sans CJK SC", sans-serif; color: #111; border: 1px solid #9c9a8c; border-top-color: #fff; border-left-color: #fff; background: #ece9d8; padding: 0; }
.tree { height: 529px; flex: none; margin: 0 1px 1px 2px; background: #fff; border: 1px solid #8a9bb0; overflow: hidden; }
.tree-tools { height: 27px; display: flex; gap: 8px; padding: 7px 0 0 4px; }
.pm { width: 15px; height: 12px; flex: none; }
.tree-list { list-style: none; margin: 0; padding: 0; }
.tree-list li { height: 16px; display: flex; align-items: center; position: relative; white-space: nowrap; }
.node { padding-left: 9px; }
.node .ic { margin: 0 5px; }
.ex { width: 9px; height: 9px; flex: none; }
.leaf { padding-left: 43px; }
.leaf .ic { margin-right: 5px; }
.leaf::before { content: ""; position: absolute; left: 31px; top: 0; bottom: 0; border-left: 1px dotted #888; }
.leaf::after { content: ""; position: absolute; left: 31px; top: 8px; width: 11px; border-top: 1px dotted #888; }
.leaf.last::before { bottom: 8px; }
.sel > span { background: #f1efe2; padding-right: 4px; }
.node .cad { margin: 0 2px 0 5px; }
.new { font: bold 9px/9px "Liberation Sans", sans-serif; background: #ffe23a; color: #203a80; align-self: flex-start; padding: 0 1px; }

/* center */
.center { width: 587px; margin-left: 6px; flex: none; display: flex; flex-direction: column; background: #ece9d8; padding-top: 1px; border-right: 1px solid #8a9bb0; }
.canvas { height: 332px; flex: none; background: #000; }
.drawing { display: block; width: 100%; height: 100%; }
.gl { fill: none; stroke: #1b7d26; stroke-width: 1; }
.rl { fill: none; stroke: #c8103c; stroke-width: 1; }
.dash { fill: none; stroke: #fff; stroke-dasharray: 4 2; }
.dim text { fill: #d8d8d8; font: 14px "Liberation Sans", sans-serif; text-anchor: middle; }
.dim .axis-id text { font-weight: bold; fill: #c8c8c8; }

.rebar-pane { flex: 1; display: flex; min-height: 0; }
.side-grip { width: 13px; flex: none; position: relative; background: repeating-linear-gradient(#bdbaa8 0 1px, transparent 1px 3px) 5px 12px / 2px 100% no-repeat; }
.pane-close { position: absolute; left: 2px; top: 3px; width: 9px; height: 9px; background: #c8483c; border: 2px solid #e89a90; }
.rebar-body { flex: 1; min-width: 0; display: flex; flex-direction: column; }

table { border-collapse: collapse; table-layout: fixed; }
.rebar { width: 572px; background: #fff; border-top: 1px solid #8a9bb0; border-left: 1px solid #8a9bb0; margin-top: 1px; }
.c-r { width: 33px; }
.c-n { width: 73px; }
.c-d { width: 57px; }
.c-g { width: 35px; }
.c-t { width: 33px; }
.c-s { width: 201px; }
.rebar th, .rebar td { border: 1px solid #b4b4ac; border-width: 0 1px 1px 0; padding: 0 0 0 3px; overflow: hidden; white-space: nowrap; font-weight: normal; }
.rebar th { background: linear-gradient(#fbfaf5, #ece9d8); text-align: center; }
.rebar tbody th { text-align: left; padding-left: 10px; background: linear-gradient(90deg, #f6f5ee, #e8e6d8); }
.rebar tbody th.now { background: #fbc98a; color: #a02018; }
.h20 { height: 20px; }
.h33 { height: 33px; }
.h34 { height: 34px; }
th.active { background: linear-gradient(#fde0b0, #f8bc70) !important; color: #a02018; }
.green td { background: #c8fbd2; }
.rebar td.dia { background: #aee2cc; }
td.cursor { border-left: 2px solid #111; }
.ctr { text-align: center; }
.grade { display: inline-block; font-size: 10px; line-height: 11px; width: 9px; border-bottom: 1px solid #111; text-align: center; margin: 0 1px; }
.rebar td.tight { white-space: normal; line-height: 14px; }
.tight i { line-height: 14px; }
.shape { display: flex; align-items: center; height: 22px; padding-left: 16px; gap: 3px; }
.bar { width: 119px; height: 14px; border: 2px solid #111; border-top: 0; text-align: center; }
.bar i { display: block; color: #c8181c; line-height: 12px; }
.shape-u { padding-left: 32px; gap: 5px; }
.ubar { width: 96px; height: 18px; margin-top: 2px; border: 2px solid #111; border-right: 0; text-align: center; }
.ubar i { display: block; color: #c8181c; line-height: 15px; margin-top: 1px; }
.hscroll { margin-top: auto; height: 12px; background: #f0efe8; display: flex; padding-left: 1px; }
.sb-btn { width: 14px; background: #c4d4f0; color: #1a3f80; font: bold 12px/11px "Liberation Sans", sans-serif; text-align: center; }
.sb-thumb { width: 87px; background: #bed0f0; }
.sb-btn.end { margin-left: auto; margin-right: 3px; }

/* right pane */
.prop-pane { flex: none; width: 254px; margin-left: 3px; }
.prop-pane .pane-x { margin-right: -5px; }
.props { width: 252px; margin: 1px 0 0 2px; border-top: 1px solid #8a9bb0; }
.p-r { width: 21px; }
.p-n { width: 121px; }
.props th, .props td { height: 19px; line-height: 14px; padding: 0 0 0 1px; border: 1px solid #b4b4ac; border-width: 0 1px 1px 0; overflow: hidden; white-space: nowrap; font-weight: normal; }
.props thead th { height: 23px; font-size: 12.500px; background: linear-gradient(#fbfaf5, #ece9d8); text-align: center; }
.props tbody th { background: linear-gradient(90deg, #f6f5ee, #e8e6d8); text-align: center; padding: 0; }
.props tbody td:nth-child(2) { padding-left: 20px; }
.props .cur th { background: #fbc98a; color: #a02018; }
.props .cur td:nth-child(2) { background: #3a6ec0; color: #fff; }
.props .cur td:nth-child(3) { background: #dce6f5; }
.bl { color: #1414b4; }
.gy { color: #9a9a9a; }
.props td.exp-cell { position: relative; }
.exbox { position: absolute; left: 4px; top: 4px; width: 11px; height: 11px; }

/* hand-drawn annotations lying over the screenshot */
.marks { position: absolute; left: 0; top: 0; width: 1014px; height: 709px; pointer-events: none; }
.ink { fill: none; stroke: #ea1118; stroke-width: 2.600; stroke-linejoin: round; stroke-linecap: round; }
.under { fill: none; stroke: #c8141c; stroke-width: 3; }
```
